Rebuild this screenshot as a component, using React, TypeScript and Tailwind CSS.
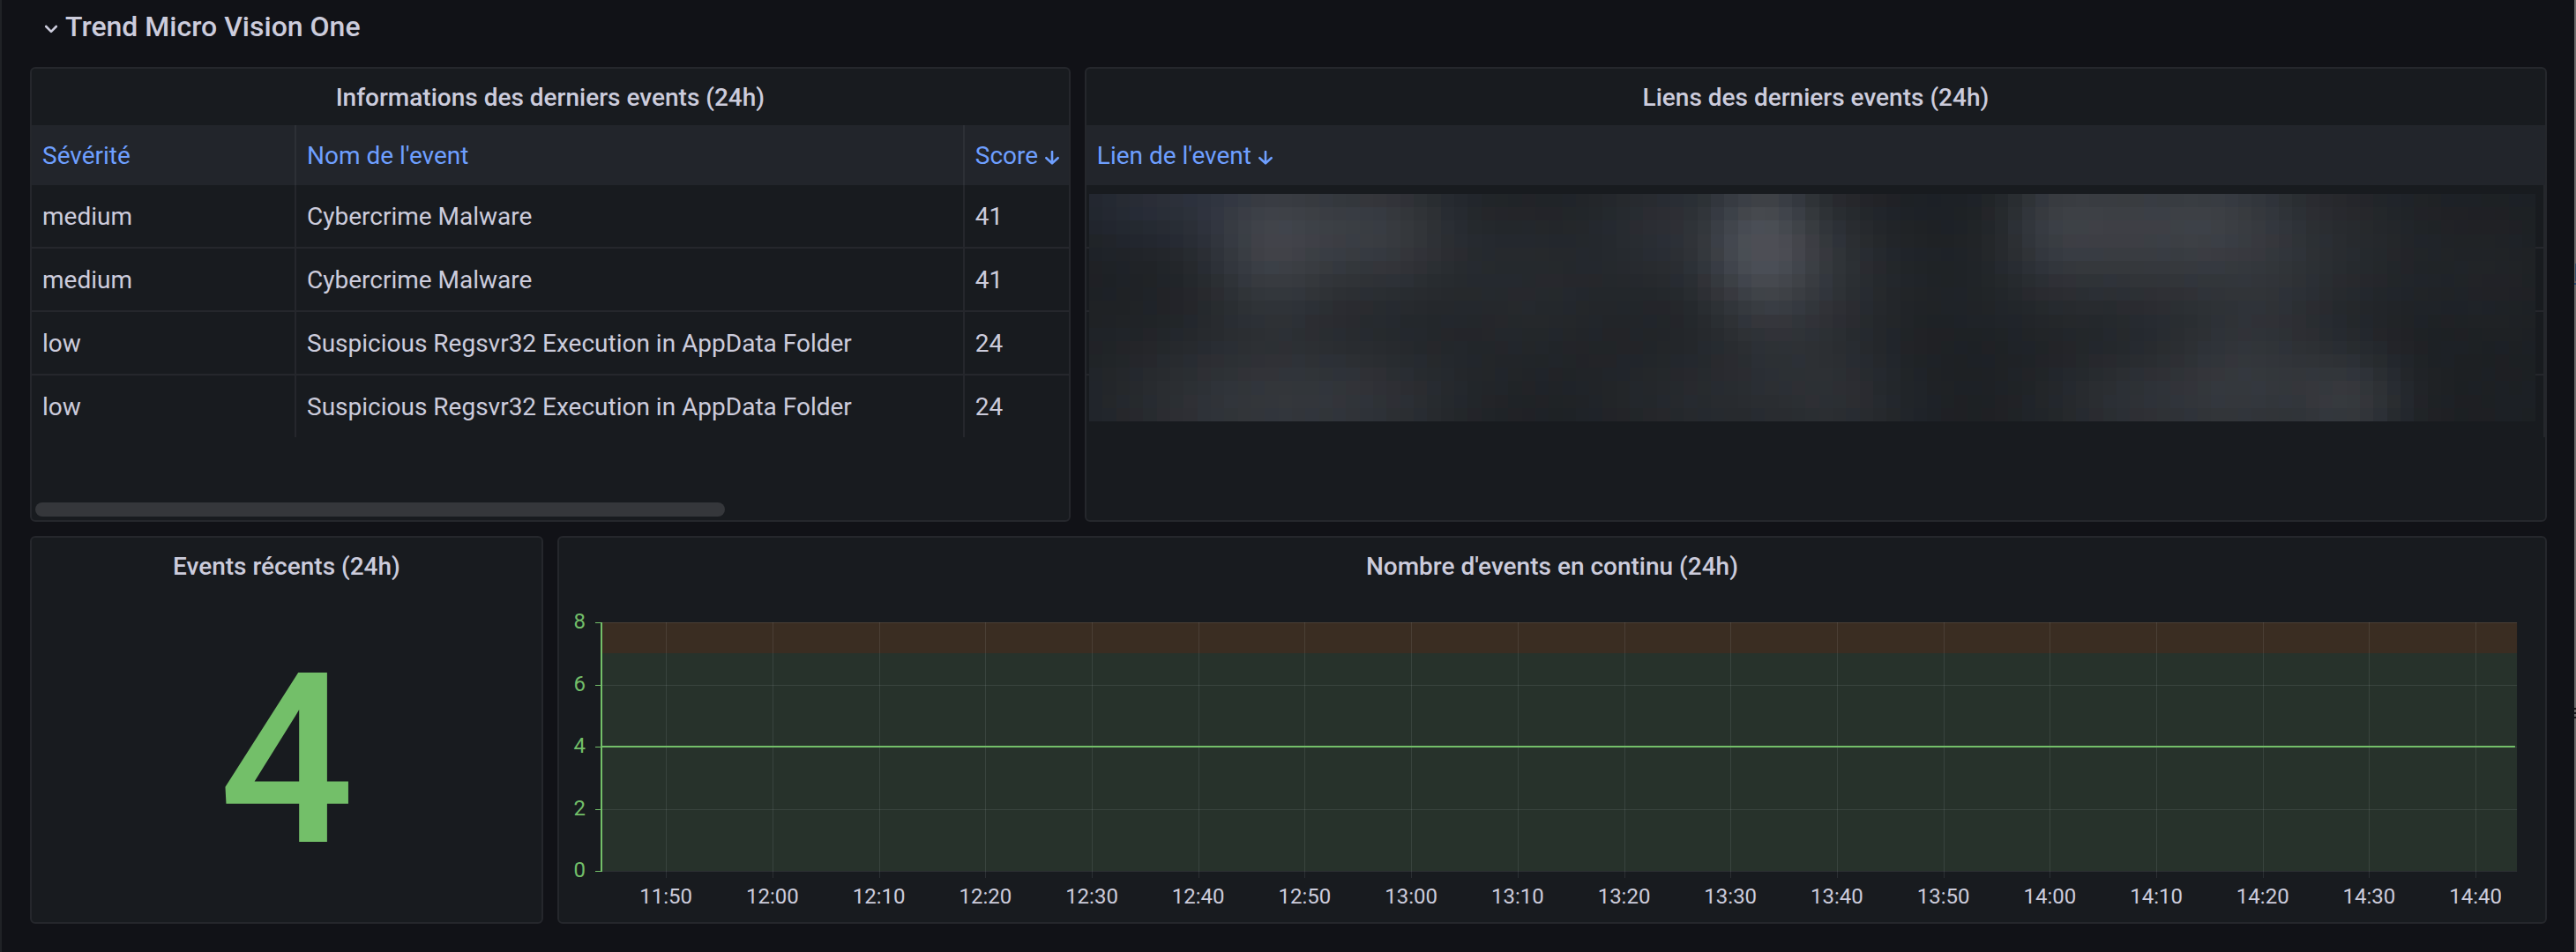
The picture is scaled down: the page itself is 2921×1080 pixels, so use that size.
import React from "react";

type EventRow = { severity: string; name: string; score: number };

const events: EventRow[] = [
  { severity: "medium", name: "Cybercrime Malware", score: 41 },
  { severity: "medium", name: "Cybercrime Malware", score: 41 },
  { severity: "low", name: "Suspicious Regsvr32 Execution in AppData Folder", score: 24 },
  { severity: "low", name: "Suspicious Regsvr32 Execution in AppData Folder", score: 24 },
];

const times = [
  "11:50", "12:00", "12:10", "12:20", "12:30", "12:40", "12:50", "13:00", "13:10",
  "13:20", "13:30", "13:40", "13:50", "14:00", "14:10", "14:20", "14:30", "14:40",
];

function Panel({ title, className, children }: { title: string; className: string; children: React.ReactNode }) {
  return (
    <section className={`flex flex-col overflow-hidden rounded-md border-2 border-[#25272c] bg-[#181b1f] ${className}`}>
      <h2 className="flex h-16 shrink-0 items-center justify-center pt-0.5 text-[28px] font-medium leading-8">{title}</h2>
      {children}
    </section>
  );
}

function ArrowDown() {
  return (
    <svg viewBox="0 0 16 16" className="ml-2 mt-1 h-4 w-4 shrink-0" fill="none" stroke="currentColor" strokeWidth="2.6" strokeLinecap="round" strokeLinejoin="round" aria-hidden="true">
      <path d="M8 1v13M1.4 8.2 8 14.4l6.6-6.2" />
    </svg>
  );
}

function HeaderCell({ label, sorted, divider }: { label: string; sorted?: boolean; divider?: boolean }) {
  return (
    <th scope="col" className={`h-[68px] px-3 pt-0.5 text-left font-normal text-[#6e9fff] ${divider ? "border-r-2 border-[#2d3036]" : ""}`}>
      <button type="button" className="flex items-center whitespace-nowrap">
        {label}
        {sorted && <ArrowDown />}
      </button>
    </th>
  );
}

function EventsTable() {
  return (
    <>
      <table className="w-full table-fixed border-separate border-spacing-0 text-[28px] leading-8">
        <colgroup>
          <col className="w-[300px]" />
          <col />
          <col className="w-[118px]" />
        </colgroup>
        <thead className="bg-[#22252b]">
          <tr>
            <HeaderCell label="Sévérité" divider />
            <HeaderCell label="Nom de l'event" divider />
            <HeaderCell label="Score" sorted />
          </tr>
        </thead>
        <tbody>
          {events.map((e, i) => {
            const line = i < events.length - 1 ? "h-[72px] border-b-2" : "h-[70px]";
            return (
              <tr key={i}>
                <td className={`border-r-2 border-[#25272c] px-3 pt-0.5 ${line}`}>{e.severity}</td>
                <td className={`truncate border-r-2 border-[#25272c] px-3 pt-0.5 ${line}`}>{e.name}</td>
                <td className={`border-[#25272c] px-3 pt-0.5 ${line}`}>{e.score}</td>
              </tr>
            );
          })}
        </tbody>
      </table>
      <div className="mt-auto px-1 pb-1">
        <div className="h-4 w-[67%] rounded-lg bg-[#35373b]" />
      </div>
    </>
  );
}

// Soft light spots of the pixelated area: x, y, spread x, spread y, strength, blueness.
const spots = [
  [90, 5, 75, 38, 0.3, 0.35], [205, 60, 52, 58, 0.58, 0], [335, 45, 60, 52, 0.45, 0], [270, 25, 60, 35, 0.12, 0],
  [175, 240, 105, 55, 0.38, 0], [325, 235, 80, 45, 0.22, 0], [500, 90, 60, 70, 0.14, 0], [640, 35, 50, 55, 0.24, 0.1],
  [760, 58, 46, 58, 0.92, 0], [845, 80, 50, 60, 0.24, 0], [690, 235, 80, 45, 0.18, 0], [850, 240, 60, 45, 0.22, 0],
  [800, 180, 60, 50, 0.12, 0], [1095, 30, 44, 50, 0.5, 0], [1180, 30, 48, 50, 0.44, 0], [1265, 28, 46, 50, 0.46, 0],
  [1340, 40, 44, 60, 0.26, 0], [1430, 50, 60, 60, 0.16, 0], [1200, 105, 150, 45, 0.16, 0], [1315, 215, 65, 62, 0.42, 0],
  [1430, 235, 44, 40, 0.42, 0], [1180, 235, 75, 42, 0.3, 0], [1585, 90, 50, 50, 0.07, 0], [400, 130, 300, 70, 0.06, 0],
];
const COLS = 107;
const ROWS = 17;
const tints = [[1, -1, 0], [-1, 0, 0], [-1, 0, 2], [0, 0, 0]];

const cells = Array.from({ length: COLS * ROWS }, (_, n) => {
  const c = n % COLS;
  const r = Math.floor(n / COLS);
  const x = (c + 0.5) * 15.3;
  const y = (r + 0.5) * 15.2;
  let light = 0.05;
  let blue = 0;
  for (const [sx, sy, dx, dy, a, b] of spots) {
    const g = a * Math.exp(-(((x - sx) / dx) ** 2 + ((y - sy) / dy) ** 2) / 2);
    light += g;
    blue += g * b;
  }
  light = Math.min(light, 1);
  const wave = Math.sin(c * 0.53 + r * 0.9) + Math.sin(c * 0.19 - r * 1.3) + Math.sin(c * r * 0.11);
  const t = tints[Math.min(3, Math.max(0, Math.floor((wave + 2) * 1.1)))];
  const red = Math.round(26 + light * 50 + t[0] - blue * 22);
  const green = Math.round(29 + light * 50 + t[1] - blue * 14);
  const bl = Math.round(32 + light * 53 + t[2] + blue * 40);
  return { c, r, fill: `rgb(${red},${green},${bl})` };
});

function Mosaic() {
  return (
    <svg viewBox={`0 0 ${COLS} ${ROWS}`} preserveAspectRatio="none" shapeRendering="crispEdges" className="absolute left-[3px] top-[10px] h-[258px] w-[calc(100%-14px)]" aria-hidden="true">
      {cells.map((k) => (
        <rect key={`${k.c}-${k.r}`} x={k.c} y={k.r} width="1" height="1" fill={k.fill} />
      ))}
    </svg>
  );
}

function LinksTable() {
  return (
    <div className="relative">
      <table className="w-full table-fixed border-separate border-spacing-0 text-[28px] leading-8">
        <thead className="bg-[#22252b]">
          <tr>
            <HeaderCell label="Lien de l'event" sorted />
          </tr>
        </thead>
        <tbody>
          {events.map((_, i) => (
            <tr key={i}>
              <td className={`border-r-2 border-[#25272c] ${i < events.length - 1 ? "h-[72px] border-b-2" : "h-[70px]"}`} />
            </tr>
          ))}
        </tbody>
      </table>
      <div className="absolute inset-x-0 bottom-0 top-[68px]">
        <Mosaic />
      </div>
    </div>
  );
}

const yOf = (v: number) => 32 + (8 - v) * 35.25;

function Chart() {
  return (
    <div className="flex pr-8">
      <svg className="h-[370px] w-12 shrink-0" aria-hidden="true">
        {[8, 6, 4, 2, 0].map((v) => (
          <g key={v}>
            <text x="30" y={Math.round(yOf(v)) + 7} textAnchor="end" fill="#73bf69" fontSize="24">{v}</text>
            <rect x="41" y={Math.round(yOf(v))} width="7" height="1" fill="#73bf69" />
          </g>
        ))}
      </svg>
      <svg className="h-[370px] min-w-0 flex-1 overflow-visible" role="img" aria-label="Nombre d'events en continu">
        <rect x="0" y="32" width="100%" height="35" fill="#3a2d22" />
        <rect x="0" y="67" width="100%" height="247" fill="#27322b" />
        {[8, 6, 4, 2, 0].map((v) => (
          <rect key={v} x="0" y={Math.round(yOf(v))} width="100%" height="1" fill="#f0faff" fillOpacity="0.09" />
        ))}
        {times.map((t, i) => {
          const x = `${3.37 + i * 5.557}%`;
          return (
            <g key={t}>
              <rect x={x} y="32" width="1" height="290" fill="#f0faff" fillOpacity="0.09" shapeRendering="crispEdges" />
              <text x={x} y="351" textAnchor="middle" fill="#ccccdc" fontSize="24">{t}</text>
            </g>
          );
        })}
        <rect x="-1" y="32" width="2" height="283" fill="#73bf69" />
        <rect x="0" y="172" width="99.9%" height="2" fill="#73bf69" />
      </svg>
    </div>
  );
}

export default function App() {
  return (
    <div className="flex min-h-screen bg-[#111217] font-['Roboto',sans-serif] text-[#ccccdc]">
      <main className="min-w-0 flex-1 border-l-2 border-[#202226] pb-8 pl-8 pr-[31px]">
        <h1 className="flex h-[60px] items-center text-[32px] font-medium leading-10">
          <button type="button" aria-expanded="true" className="flex items-center gap-2 pl-4">
            <svg viewBox="0 0 16 16" className="mt-1.5 h-4 w-4" fill="none" stroke="currentColor" strokeWidth="2.6" strokeLinecap="round" strokeLinejoin="round" aria-hidden="true">
              <path d="M2.2 5 8 10.8 13.8 5" />
            </svg>
            Trend Micro Vision One
          </button>
        </h1>
        <div className="mt-4 grid grid-cols-24 gap-4">
          <Panel title="Informations des derniers events (24h)" className="col-span-10 h-[516px]">
            <EventsTable />
          </Panel>
          <Panel title="Liens des derniers events (24h)" className="col-span-14 h-[516px]">
            <LinksTable />
          </Panel>
          <Panel title="Events récents (24h)" className="col-span-5 h-[440px]">
            <div className="flex flex-1 items-center justify-center pt-1.5 text-[270px] font-medium leading-none text-[#73bf69]">4</div>
          </Panel>
          <Panel title="Nombre d'events en continu (24h)" className="col-span-19 h-[440px]">
            <Chart />
          </Panel>
        </div>
      </main>
      <div className="flex w-0.5 shrink-0 flex-col items-end bg-[#6b6a6a]" aria-hidden="true">
        <div className="mt-[299px] h-5 w-px bg-[#3a5068]" />
        <div className="mt-0.5 h-0.5 w-0.5 bg-[#2a4a70]" />
        <div className="mt-[480px] flex w-0.5 flex-col gap-[3px]">
          <div className="h-0.5 bg-[#1a1a1c]" />
          <div className="h-0.5 bg-[#1a1a1c]" />
          <div className="h-0.5 bg-[#1a1a1c]" />
        </div>
      </div>
    </div>
  );
}
